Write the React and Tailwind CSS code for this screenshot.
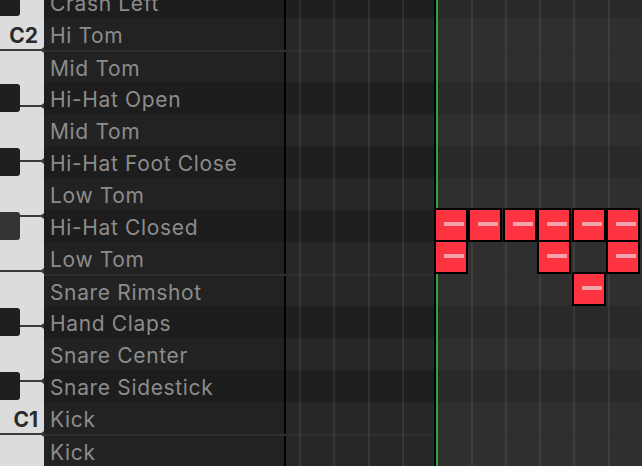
const rows = [
  { name: "Crash Left", black: true },
  { name: "Hi Tom" },
  { name: "Mid Tom", line: true },
  { name: "Hi-Hat Open", black: true },
  { name: "Mid Tom" },
  { name: "Hi-Hat Foot Close", black: true },
  { name: "Low Tom" },
  { name: "Hi-Hat Closed", black: true, active: true },
  { name: "Low Tom" },
  { name: "Snare Rimshot", line: true },
  { name: "Hand Claps", black: true },
  { name: "Snare Center" },
  { name: "Snare Sidestick", black: true },
  { name: "Kick" },
  { name: "Kick", line: true },
];

// white key heights, each ends with its 2px divider
const whiteKeys = [
  { h: 51, label: "C2" },
  { h: 56 },
  { h: 55 },
  { h: 55 },
  { h: 55 },
  { h: 55 },
  { h: 55 },
  { h: 53, label: "C1" },
];

const notes = [
  [7, 0], [7, 1], [7, 2], [7, 3], [7, 4], [7, 5],
  [8, 0], [8, 3], [8, 5],
  [9, 4],
];

const gridLines = [0, 1, 2, 3, 5, 6, 7, 8, 9].map((k) => Math.round(299 + 34.3 * k));
const noteLefts = [434, 468, 503, 537, 572, 606];

const rowTop = (i) => -14 + 32 * i;

function Piano() {
  return (
    <div className="relative w-[44px] shrink-0 bg-[#dcdcdc] flex flex-col">
      {whiteKeys.map((k, i) => (
        <div
          key={i}
          style={{ height: k.h }}
          className="relative shrink-0 border-b-2 border-[#3a3a3a] flex items-end justify-end"
        >
          {k.label && (
            <span className="h-[32px] pt-[5px] leading-[27px] pr-[6px] text-[21px] font-bold text-[#2a2a2a] font-['Inter',sans-serif]">
              {k.label}
            </span>
          )}
          <span className="absolute right-0 -bottom-[4px] w-0 h-0 border-y-[3px] border-y-transparent border-r-[4px] border-r-[#3a3a3a]" />
        </div>
      ))}
      <div className="flex-1" />
      {rows.map((r, i) =>
        r.black ? (
          <div
            key={i}
            style={{ top: rowTop(i) + 2 }}
            className={
              "absolute left-0 w-[20px] h-[28px] rounded-r-[3px] " +
              (r.active ? "bg-[#333333]" : "bg-[#1f1f1f]")
            }
          />
        ) : null
      )}
    </div>
  );
}

export default function App() {
  return (
    <div className="w-[642px] h-[466px] overflow-hidden bg-[#1e1e1e] flex font-['Inter',sans-serif]">
      <Piano />
      <div className="relative flex-1">
        <div className="-mt-[14px] flex flex-col">
          {rows.map((r, i) => (
            <div
              key={i}
              className={
                "h-[32px] flex " + (r.line ? "border-t-2 border-[#2e2e2e]" : "")
              }
            >
              <div
                className={
                  "w-[240px] pl-[6px] pt-[3px] flex items-center whitespace-nowrap text-[21px] tracking-[0.65px] text-[#8c8c8c] " +
                  (r.black ? "bg-[#1d1d1d]" : "bg-[#222222]")
                }
              >
                {r.name}
              </div>
              <div className="w-[2px] bg-black" />
              <div className={"w-[148px] " + (r.black ? "bg-[#1f1f1f]" : "bg-[#272727]")} />
              <div className={"flex-1 " + (r.black ? "bg-[#292929]" : "bg-[#2f2f2f]")} />
            </div>
          ))}
        </div>

        {gridLines.map((x) => (
          <div
            key={x}
            style={{ left: x - 44 }}
            className="absolute top-0 bottom-0 w-[2px] bg-[#ffffff12]"
          />
        ))}
        <div className="absolute top-0 bottom-0 left-[390px] w-[2px] bg-black" />
        <div className="absolute top-0 bottom-0 left-[392px] w-[2px] bg-[#2ea43b]" />

        {notes.map(([r, c], i) => (
          <div
            key={i}
            style={{ left: noteLefts[c] - 44, top: rowTop(r) - 2 }}
            className="absolute w-[34px] h-[34px] border-2 border-black bg-[#fe3342]"
          >
            <div className="absolute left-[8px] top-[12px] w-[20px] h-[4px] bg-[#f5a3aa]" />
          </div>
        ))}
      </div>
    </div>
  );
}
